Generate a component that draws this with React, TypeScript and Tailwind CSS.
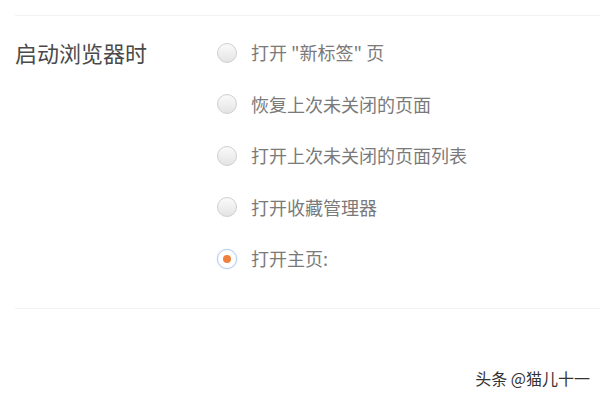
import React from 'react';

const options = [
  { label: '打开 "新标签" 页', checked: false },
  { label: '恢复上次未关闭的页面', checked: false },
  { label: '打开上次未关闭的页面列表', checked: false },
  { label: '打开收藏管理器', checked: false },
  { label: '打开主页:', checked: true },
];

const Radio: React.FC<{ checked: boolean }> = ({ checked }) =>
  checked ? (
    <span className="w-[20px] h-[20px] rounded-full border border-[#b9cdea] bg-white flex items-center justify-center shadow-[0_0_2px_#cddcf2]">
      <span className="w-[8px] h-[8px] rounded-full bg-[#f0803c]" />
    </span>
  ) : (
    <span className="w-[20px] h-[20px] rounded-full border border-[#cfcfcf] bg-gradient-to-b from-[#fafafa] to-[#e4e4e4]" />
  );

const App: React.FC = () => {
  return (
    <div className="w-[600px] h-[400px] bg-white font-['Noto_Sans_CJK_SC',sans-serif] flex flex-col">
      <div className="ml-[15px] mt-[15px] h-px bg-[#f2f2f2]" />
      <div className="flex pt-[11px] pb-[23px]">
        <div className="w-[201px] pl-[15px] h-[51.5px] flex items-center text-[22px] text-[#4a4a4a]">启动浏览器时</div>
        <div className="flex flex-col pl-[16px]">
          {options.map((o) => (
            <label key={o.label} className="h-[51.5px] flex items-center gap-[14px]">
              <Radio checked={o.checked} />
              <span className="text-[18px] text-[#7a7a7a]">{o.label}</span>
            </label>
          ))}
        </div>
      </div>
      <div className="ml-[15px] h-px bg-[#f2f2f2]" />
      <div className="flex-1 flex items-end justify-end pr-[10px] pb-[10px]">
        <span className="text-[16px] text-[#333]">头条 @猫儿十一</span>
      </div>
    </div>
  );
};

export default App;
